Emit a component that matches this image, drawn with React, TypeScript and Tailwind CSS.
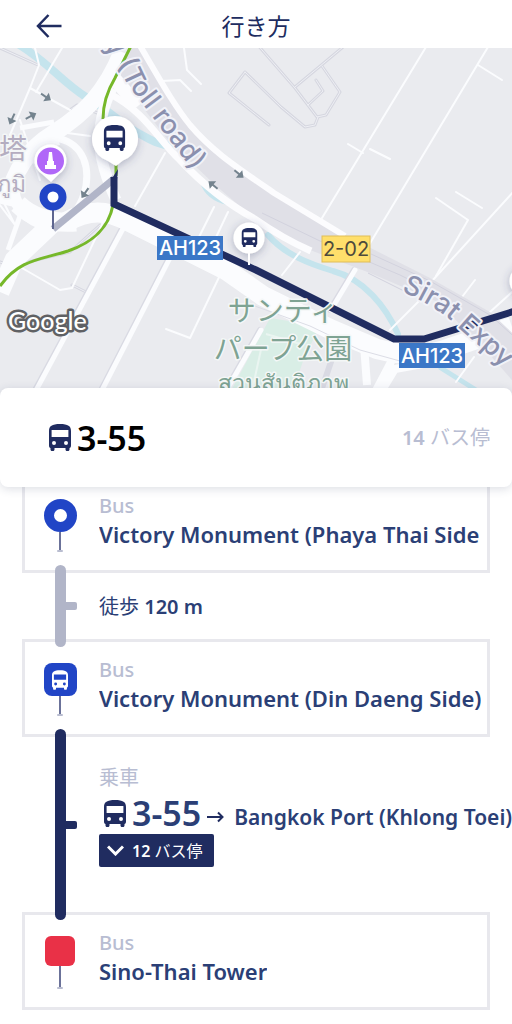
import type { ReactNode } from "react";

function BusIcon({ className = "" }: { className?: string }) {
  return (
    <svg viewBox="0 0 22 27" className={className} fill="currentColor" aria-hidden="true">
      <path
        fillRule="evenodd"
        d="M0 7C0 2 3 0 11 0s11 2 11 7v14.500c0 1.500-.6 2.300-1.500 2.500v1.500c0 .8-.6 1.500-1.400 1.500h-1.200c-.8 0-1.400-.7-1.400-1.500V24h-11v1.500c0 .8-.6 1.500-1.400 1.500H2.900c-.8 0-1.400-.7-1.400-1.500V24C.6 23.800 0 23 0 21.500ZM2.600 6v7h16.800V6ZM5 17a2 2 0 1 0 0 4 2 2 0 0 0 0-4Zm12 0a2 2 0 1 0 0 4 2 2 0 0 0 0-4Z"
      />
    </svg>
  );
}

// small one-way marker, drawn pointing right
function Arrow({ x, y, angle }: { x: number; y: number; angle: number }) {
  return (
    <g transform={`translate(${x} ${y}) rotate(${angle})`} fill="none" stroke="#74838e" strokeWidth="2">
      <path d="M-6 0H2" />
      <path d="M0-5 6 0 0 5Z" fill="#74838e" stroke="none" />
    </g>
  );
}

const alleys = [
  "M256 43 295 88 317 117 326 115 340 92 322 66M295 87 343 47M308 105 323 91 316 80",
  "M245 72 229 93 269 125M245 72 281 107 305 127 315 125 318 117",
  "M0 48 38 65M70 110 77 105 100 114M0 262 11 266 70 252 100 225M105 212 133 229M72 285 86 292",
];

const streets = [
  "M426 47 370 139 322 218M488 47 366 250M515 190 432 281M370 149 390 159M363 153 348 144M478 65 502 80M456 382l18-25M512 292l-22 20",
  "M456 192 482 208M436 198 468 220M468 220 436 276M475 280 462 297M420 300 390 330",
  "M184 48 187 70 201 84M162 81 180 80 191 91M62 48 36 92M35 48 39 65 30 88 10 135M30 88 70 110",
  "M214 207 190 255M228 212 210 250M222 271 190 338 166 329M22 268 60 290 72 288 105 218M165 153 135 206",
  "M0 195 15 225 0 205M40 180 20 120M5 145 18 155M60 132 90 136M300 252 282 275",
];

function TransitMap() {
  return (
    <svg viewBox="0 48 512 352" preserveAspectRatio="xMidYMin slice" className="block h-[352px] w-full" role="img" aria-label="地図">
      <defs>
        <path id="toll-label" d="M99 42Q113 54 126 82L220 207" />
        <path id="sirat-label" d="M401 291Q440 308 460 329L540 400" />
        <filter id="pin-shadow" x="-50%" y="-50%" width="200%" height="200%">
          <feDropShadow dx="0" dy="2" stdDeviation="4" floodColor="#3d4370" floodOpacity="0.35" />
        </filter>
      </defs>
      <rect y="48" width="512" height="352" fill="#eaebef" />

      {/* park and canal */}
      <path d="M270 318 320 326 304 358 290 400H226Z" fill="#d9eee6" />
      <path d="M262 345 250 400M266 334 304 345" stroke="#eaf5f1" strokeWidth="2" />
      <g fill="none" stroke="#c5e4ed" strokeLinecap="round">
        <path d="M18 44C48 62 62 82 86 97C110 111 124 126 140 134C152 141 160 145 172 146" strokeWidth="8" />
        <path d="M202 182C206 194 214 200 228 203" strokeWidth="4" />
        <path d="M268 235C285 255 310 264 333 271C364 279 386 307 398 334" strokeWidth="6" />
        <path d="M441 368 476 390" strokeWidth="5" />
      </g>

      <g fill="none" strokeLinejoin="round" strokeLinecap="round">
        {alleys.map((d) => (
          <path key={d} d={d} stroke="#d6d7e0" strokeWidth="3" />
        ))}
        {alleys.map((d) => (
          <path key={d} d={d} stroke="#eeeff4" strokeWidth="1" />
        ))}
        <g stroke="#d9dae3" strokeWidth="6">
          <path d="M124 225 32 396M172 252 98 396M354 270 330 310M260 330 228 386M335 350 318 400" />
        </g>
        <g stroke="#fbfcfe" strokeWidth="5">
          <path d="M125 225 33 396M173 252 99 396M355 270 331 310M261 330 229 386" />
        </g>
        {streets.map((d) => (
          <path key={d} d={d} stroke="#fbfcfe" strokeWidth="2" />
        ))}
      </g>

      {/* Victory Monument interchange */}
      <g fill="none" stroke="#fbfcfe" strokeLinejoin="round">
        <path d="M122 52C106 92 85 113 54 133C28 149 14 170 6 205" strokeWidth="17" />
        <path d="M112 88C92 130 98 160 116 200" strokeWidth="11" />
        <path d="M46 138C78 136 90 160 86 186C82 206 74 216 56 226" strokeWidth="7" />
        <path d="M58 139C38 146 18 160 14 184C11 204 26 220 50 226" strokeWidth="12" />
        <path d="M18 204C30 216 50 224 76 222M54 222 14 260 0 292" strokeWidth="19" />
        <path d="M6 180 22 210 8 250M20 128 54 122" strokeWidth="5" />
        <path d="M66 222C90 209 106 210 128 221L226 270 263 296 330 329 377 349Q420 360 450 348L512 327" strokeWidth="20" />
        <path d="M364 345 367 385M392 360 372 398M434 362 395 369 376 400" strokeWidth="8" />
      </g>
      <path d="M252 305 310 326 360 350 400 361" fill="none" stroke="#dcdde6" strokeWidth="1" />

      {/* elevated expressway */}
      <path d="M128 48 140 48 190 125 230 162 275 193 345 235 430 278 490 312 525 345V395L490 355 438 302 370 273 310 250 255 219 215 185 168 140 120 78Z" fill="#e0e0e7" />
      <g fill="none" stroke="#fcfcfe" strokeLinejoin="round">
        <path d="M139 44C163 85 174 105 190 125C212 151 235 166 274 193L345 236" strokeWidth="6" />
        <path d="M110 94C145 112 157 138 180 160C207 189 235 208 255 219Q282 238 311 251" strokeWidth="7" />
        <path d="M112 76 138 106" strokeWidth="14" />
      </g>
      <path d="M371 254 430 281 490 315 520 342M262 213 320 241 400 275 450 300M368 273 402 290 430 300" fill="none" stroke="#d2d2de" strokeWidth="1" />

      {/* rail */}
      <path d="M131 46 115 78Q103 98 103 119M116 163V176M113 205C108 232 88 244 68 251C40 260 20 259 0 286" fill="none" stroke="#76b82a" strokeWidth="3" />

      <path d="M53 229 115 178" stroke="#b1b5c8" strokeWidth="7" />
      <path d="M118 169 117 180H111Z" fill="#202c60" />
      <path d="M114 177V204L256 270 394 339H424L515 311" fill="none" stroke="#202c60" strokeWidth="7" />

      <g fill="#8b90ae" stroke="#f1f2f8" strokeWidth="4" paintOrder="stroke" strokeLinejoin="round" className="text-[27px] font-medium [font-family:Inter,sans-serif]">
        <text>
          <textPath href="#toll-label" startOffset="6">y (Toll road)</textPath>
        </text>
        <text>
          <textPath href="#sirat-label">Sirat Expy</textPath>
        </text>
      </g>

      <Arrow x={46} y={97} angle={34} />
      <Arrow x={31} y={116} angle={-28} />
      <Arrow x={12} y={119} angle={115} />
      <Arrow x={239} y={174} angle={40} />
      <Arrow x={213} y={185} angle={220} />
      <Arrow x={85} y={193} angle={125} />

      <g stroke="#f4f7f7" strokeWidth="3" paintOrder="stroke" strokeLinejoin="round" className="[font-family:'Noto_Sans','Noto_Sans_CJK_JP',sans-serif]">
        <g fill="#7ea393" textAnchor="middle">
          <text x="283" y="321" className="text-[28px]">サンティ</text>
          <text x="283" y="359" className="text-[28px]">パープ公園</text>
          <text x="283" y="391" className="text-[23px]">สวนสันติภาพ</text>
        </g>
        <g fill="#b4adc0" textAnchor="end">
          <text x="27" y="159" className="text-[28px]">塔</text>
          <text x="26" y="192" className="text-[23px]">ภูมิ</text>
        </g>
      </g>

      <g textAnchor="middle" className="text-[20px] [font-family:Inter,sans-serif]">
        <rect x="157" y="236" width="66" height="24" fill="#3b77c7" />
        <text x="190" y="255" fill="#fff" className="font-medium">AH123</text>
        <rect x="399" y="343" width="66" height="25" fill="#3b77c7" />
        <text x="432" y="363" fill="#fff" className="font-medium">AH123</text>
        <rect x="322" y="236" width="48" height="26" fill="#ffdf6b" stroke="#e0bd58" />
        <text x="346" y="256" fill="#4e4a3c">2-02</text>
      </g>

      <text x="8" y="330" fill="#fff" stroke="#606164" strokeWidth="5" paintOrder="stroke" strokeLinejoin="round" className="text-[25px] font-medium [font-family:Lato,sans-serif]">
        Google
      </text>

      {/* pins */}
      <g filter="url(#pin-shadow)">
        <path d="M116 166 107 160.500A23 23 0 1 1 123 160.500Z" fill="#fff" />
        <path d="M51 182 42 174A16 16 0 1 1 59 174Z" fill="#fff" />
      </g>
      <circle cx="50.500" cy="161" r="13.500" fill="#b067f8" />
      <path d="M49 152h3l1 9h1v4h2v4H45v-4h2v-4h1Z" fill="#fff" />
      <path d="M53 208V229" stroke="#5e6690" strokeWidth="2" />
      <circle cx="53" cy="197" r="9.500" fill="#fff" stroke="#2145c6" strokeWidth="8" />
      <g filter="url(#pin-shadow)" fill="#fff">
        <circle cx="249" cy="238" r="15.500" />
        <circle cx="525" cy="281" r="15.500" />
        <path d="M248 252h2v13h-2Z" />
      </g>
      <g color="#202c60">
        <svg x="103" y="125" width="23" height="26">
          <BusIcon />
        </svg>
        <svg x="241" y="228" width="17" height="19">
          <BusIcon />
        </svg>
      </g>
    </svg>
  );
}

function Stop({ name, children }: { name: string; children: ReactNode }) {
  return (
    <li className="flex items-start border-3 border-[#e8e8ed] bg-white pt-3.5 pb-[18px] pl-[13px]">
      <div className="mt-[7px] flex h-[53px] w-11 shrink-0 flex-col items-center">
        {children}
        <span className="w-0.5 flex-1 bg-[#6b7299]" />
        <span className="h-0.5 w-1.5 rounded-full bg-[#b9bdd0]" />
      </div>
      <div className="ml-[17px] min-w-0 overflow-hidden whitespace-nowrap">
        <p className="text-[20px] leading-7 font-medium text-[#b8bdd2]">Bus</p>
        <p className="text-[22px] leading-7 font-semibold text-[#2b3f76]">{name}</p>
      </div>
    </li>
  );
}

function Leg({ tone, className, children }: { tone: string; className: string; children: ReactNode }) {
  return (
    <li className="flex pl-[33px]">
      <span className={`relative z-10 -my-2 w-[11px] shrink-0 rounded-full ${tone}`} />
      <span className={`h-2 w-[11px] shrink-0 self-center rounded-r-xs ${tone}`} />
      <div className={`ml-[22px] whitespace-nowrap ${className}`}>{children}</div>
    </li>
  );
}

export default function App() {
  return (
    <div className="min-h-screen overflow-x-hidden bg-white text-[#202c60] [font-family:'Noto_Sans','Noto_Sans_CJK_JP',sans-serif]">
      <header className="grid h-12 grid-cols-[1fr_auto_1fr] items-center px-9">
        <button type="button" aria-label="戻る" className="justify-self-start pt-1">
          <svg width="26" height="24" viewBox="0 0 26 24" fill="none" stroke="currentColor" strokeWidth="2.500">
            <path d="M25.500 12H2M12.500 1 2 12l10.500 11" />
          </svg>
        </button>
        <h1 className="pt-1 text-[23px] leading-8">行き方</h1>
      </header>

      <main>
        <div className="h-[340px]">
          <TransitMap />
        </div>

        <section className="relative z-20 flex h-[99px] items-center justify-between rounded-lg bg-white pr-[22px] pl-[49px] shadow-[0_2px_10px_rgba(40,50,90,0.16)]">
          <div className="flex items-center gap-1.5">
            <BusIcon className="h-[27px] w-[22px]" />
            <h2 className="text-[34px] leading-10 font-semibold text-black">3-55</h2>
          </div>
          <p className="text-[20px] text-[#b8bdd2]">
            <span className="font-semibold">14</span> バス停
          </p>
        </section>

        <ol className="-mt-3 px-[22px] pb-3.5">
          <Stop name="Victory Monument (Phaya Thai Side">
            <span className="size-[33px] rounded-full border-[10px] border-[#2145c6]" />
          </Stop>
          <Leg tone="bg-[#b1b5c8]" className="pt-5 pb-[18px] text-[20px] leading-7 text-[#2b3f76]">
            徒歩 <span className="font-semibold">120 m</span>
          </Leg>
          <Stop name="Victory Monument (Din Daeng Side)">
            <span className="flex size-[33px] items-center justify-center rounded-lg bg-[#2145c6] text-white">
              <BusIcon className="h-5 w-4" />
            </span>
          </Stop>
          <Leg tone="bg-[#202c60]" className="pt-[27px] pb-[45px]">
            <p className="text-[20px] leading-7 text-[#b8bdd2]">乗車</p>
            <div className="flex h-[42px] items-center pl-[5px]">
              <BusIcon className="h-[27px] w-[22px] shrink-0" />
              <span className="ml-1.5 text-[34px] leading-10 font-semibold text-[#2b3f76]">3-55</span>
              <svg width="17" height="12" viewBox="0 0 17 12" fill="none" stroke="currentColor" strokeWidth="2" className="mt-2 ml-1.5 shrink-0" aria-hidden="true">
                <path d="M0 6h15M11 1.500 15.500 6 11 10.500" />
              </svg>
              <span className="mt-2 ml-2.5 text-[21px] leading-7 font-semibold text-[#2b3f76]">Bangkok Port (Khlong Toei)</span>
            </div>
            <button type="button" aria-expanded="false" className="flex h-[33px] items-center gap-2 rounded-xs bg-[#202c60] pr-3 pl-2 text-[16px] text-white">
              <svg width="17" height="11" viewBox="0 0 17 11" fill="none" stroke="currentColor" strokeWidth="3" aria-hidden="true">
                <path d="M1 1.500 8.500 9 16 1.500" />
              </svg>
              <span>
                <span className="font-semibold">12</span> バス停
              </span>
            </button>
          </Leg>
          <Stop name="Sino-Thai Tower">
            <span className="size-[30px] rounded-md bg-[#e93147]" />
          </Stop>
        </ol>
      </main>
    </div>
  );
}
